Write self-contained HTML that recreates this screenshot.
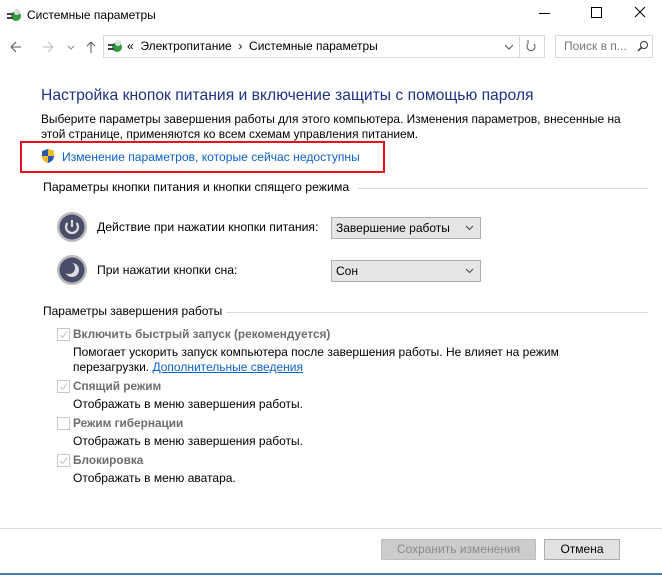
<!DOCTYPE html>
<html><head><meta charset="utf-8"><style>
body{margin:0;width:662px;height:575px;overflow:hidden;background:#fff;font-family:"Liberation Sans",sans-serif;font-size:11.8px;color:#000;position:relative}
.a{position:absolute;white-space:nowrap}
.g{color:#6d6d6d;font-weight:bold;font-size:11.8px}
.cb{position:absolute;width:11px;height:11px;border:1px solid #c8c8c8;background:#fff}
.cb svg{position:absolute;left:1px;top:1px}
.dd{position:absolute;left:331px;width:148px;height:20px;border:1px solid #adadad;background:#e5e5e5;font-size:12px}
.dd span{position:absolute;left:4px;top:3px}
.dd svg{position:absolute;right:6px;top:7px}
.btn{position:absolute;top:539px;height:19px;border:1px solid #adadad;background:#e1e1e1;text-align:center;line-height:19px;font-size:12px}
.t{font-size:12px}
</style></head><body>
<svg class="a" style="left:6px;top:7px" width="16" height="16"><circle cx="10" cy="9" r="5" fill="#2f9a3b"/><rect x="1" y="6" width="6" height="2" fill="#444"/><rect x="1" y="10" width="6" height="2" fill="#444"/><circle cx="11" cy="5" r="3" fill="#ddd"/></svg>
<div class="a" style="left:27px;top:8px;font-size:12px">Системные параметры</div>
<div class="a" style="left:539px;top:13px;width:11px;height:1px;background:#000"></div>
<div class="a" style="left:591px;top:7px;width:9px;height:9px;border:1px solid #000"></div>
<svg class="a" style="left:634px;top:6px" width="12" height="12"><path d="M1 1L11 11M11 1L1 11" stroke="#000" stroke-width="1"/></svg>
<svg class="a" style="left:8px;top:40px" width="80" height="14"><path d="M3 7H13M3 7L8 2M3 7L8 12" stroke="#555" fill="none"/><path d="M45 7H35M45 7L40 2M45 7L40 12" stroke="#bbb" fill="none"/><path d="M60 6L63 9L66 6" stroke="#888" fill="none"/></svg>
<svg class="a" style="left:86px;top:40px" width="10" height="14"><path d="M5 13V2M5 2L1 6M5 2L9 6" stroke="#555" fill="none"/></svg>
<div class="a" style="left:103px;top:35px;width:440px;height:21px;border:1px solid #d9d9d9"></div>
<div class="a" style="left:519px;top:36px;width:1px;height:21px;background:#d9d9d9"></div>
<svg class="a" style="left:107px;top:38px" width="16" height="16"><circle cx="10" cy="9" r="5" fill="#2f9a3b"/><rect x="1" y="6" width="6" height="2" fill="#444"/><rect x="1" y="10" width="6" height="2" fill="#444"/><circle cx="11" cy="5" r="3" fill="#ddd"/></svg>
<div class="a" style="left:127px;top:39px;font-size:12px">«&nbsp; Электропитание &nbsp;›&nbsp; Системные параметры</div>
<svg class="a" style="left:504px;top:43px" width="10" height="8"><path d="M1 2L5 6L9 2" stroke="#555" fill="none"/></svg>
<svg class="a" style="left:525px;top:39px" width="12" height="14"><path d="M9 5A4 4 0 1 1 3 5M3 5V1" stroke="#555" fill="none"/></svg>
<div class="a" style="left:555px;top:35px;width:96px;height:21px;border:1px solid #d9d9d9"></div>
<div class="a" style="left:564px;top:39px;color:#777;font-size:12px">Поиск в п...</div>
<svg class="a" style="left:637px;top:40px" width="12" height="12"><circle cx="7" cy="5" r="3.5" stroke="#333" fill="none"/><path d="M4.5 7.5L1 11" stroke="#333" stroke-width="1.5"/></svg>
<div class="a" style="left:41px;top:87px;font-size:15.7px;color:#1e3287">Настройка кнопок питания и включение защиты с помощью пароля</div>
<div class="a" style="left:41px;top:112px;line-height:15px;font-size:11.9px">Выберите параметры завершения работы для этого компьютера. Изменения параметров, внесенные на<br>этой странице, применяются ко всем схемам управления питанием.</div>
<div class="a" style="left:20px;top:141px;width:365px;height:32px;border:2px solid #e8101a;box-sizing:border-box"></div>
<svg class="a" style="left:41px;top:148px" width="14" height="16"><path d="M7 1L13 3V8C13 12 10 14 7 15C4 14 1 12 1 8V3Z" fill="#2b5aa8"/><path d="M7 1L13 3V8H7ZM7 8V15C4 14 1 12 1 8Z" fill="#f2b929"/></svg>
<div class="a" style="left:62px;top:150px;color:#0d62c9;font-size:12.1px">Изменение параметров, которые сейчас недоступны</div>
<div class="a" style="left:43px;top:180px;font-size:12.3px">Параметры кнопки питания и кнопки спящего режима</div>
<div class="a" style="left:358px;top:188px;width:290px;height:1px;background:#d9d9d9"></div>
<svg class="a" style="left:56px;top:211px" width="32" height="32"><circle cx="16" cy="16" r="15" fill="#bbb"/><circle cx="16" cy="16" r="12.5" fill="#4a4d6a"/><path d="M11.5 12A6 6 0 1 0 20.5 12" stroke="#ddd" stroke-width="2.2" fill="none"/><path d="M16 9V16" stroke="#ddd" stroke-width="2.2"/></svg>
<svg class="a" style="left:56px;top:254px" width="32" height="32"><circle cx="16" cy="16" r="15" fill="#bbb"/><circle cx="16" cy="16" r="12.5" fill="#4a4d6a"/><circle cx="16" cy="16" r="7" fill="#ddd"/><circle cx="13" cy="14" r="6" fill="#4a4d6a"/></svg>
<div class="a" style="left:97px;top:220px;font-size:12.2px">Действие при нажатии кнопки питания:</div>
<div class="a" style="left:97px;top:263px;font-size:12.2px">При нажатии кнопки сна:</div>
<div class="dd" style="top:217px"><span>Завершение работы</span><svg width="9" height="6"><path d="M1 1L4.5 4.5L8 1" stroke="#444" fill="none"/></svg></div>
<div class="dd" style="top:260px"><span>Сон</span><svg width="9" height="6"><path d="M1 1L4.5 4.5L8 1" stroke="#444" fill="none"/></svg></div>
<div class="a" style="left:43px;top:304px;font-size:12px">Параметры завершения работы</div>
<div class="a" style="left:226px;top:312px;width:422px;height:1px;background:#d9d9d9"></div>
<div class="cb" style="left:57px;top:328px"><svg width="9" height="9"><path d="M1 5L3.5 7.5L8 1.5" stroke="#c0c0c0" fill="none"/></svg></div>
<div class="a g" style="left:73px;top:327px">Включить быстрый запуск (рекомендуется)</div>
<div class="a t" style="left:73px;top:345px;line-height:15px">Помогает ускорить запуск компьютера после завершения работы. Не влияет на режим<br>перезагрузки. <span style="color:#0d62c9;text-decoration:underline">Дополнительные сведения</span></div>
<div class="cb" style="left:57px;top:380px"><svg width="9" height="9"><path d="M1 5L3.5 7.5L8 1.5" stroke="#c0c0c0" fill="none"/></svg></div>
<div class="a g" style="left:73px;top:379px">Спящий режим</div>
<div class="a t" style="left:73px;top:397px">Отображать в меню завершения работы.</div>
<div class="cb" style="left:57px;top:417px"></div>
<div class="a g" style="left:73px;top:416px">Режим гибернации</div>
<div class="a t" style="left:73px;top:434px">Отображать в меню завершения работы.</div>
<div class="cb" style="left:57px;top:454px"><svg width="9" height="9"><path d="M1 5L3.5 7.5L8 1.5" stroke="#c0c0c0" fill="none"/></svg></div>
<div class="a g" style="left:73px;top:453px">Блокировка</div>
<div class="a t" style="left:73px;top:471px">Отображать в меню аватара.</div>
<div class="a" style="left:0;top:528px;width:662px;height:1px;background:#d9d9d9"></div>
<div class="btn" style="left:381px;width:153px;color:#8a8a8a;background:#cccccc;border-color:#bfbfbf">Сохранить изменения</div>
<div class="btn" style="left:544px;width:74px">Отмена</div>
<div class="a" style="left:0;top:573px;width:662px;height:2px;background:#3d7fc1"></div>
</body></html>
